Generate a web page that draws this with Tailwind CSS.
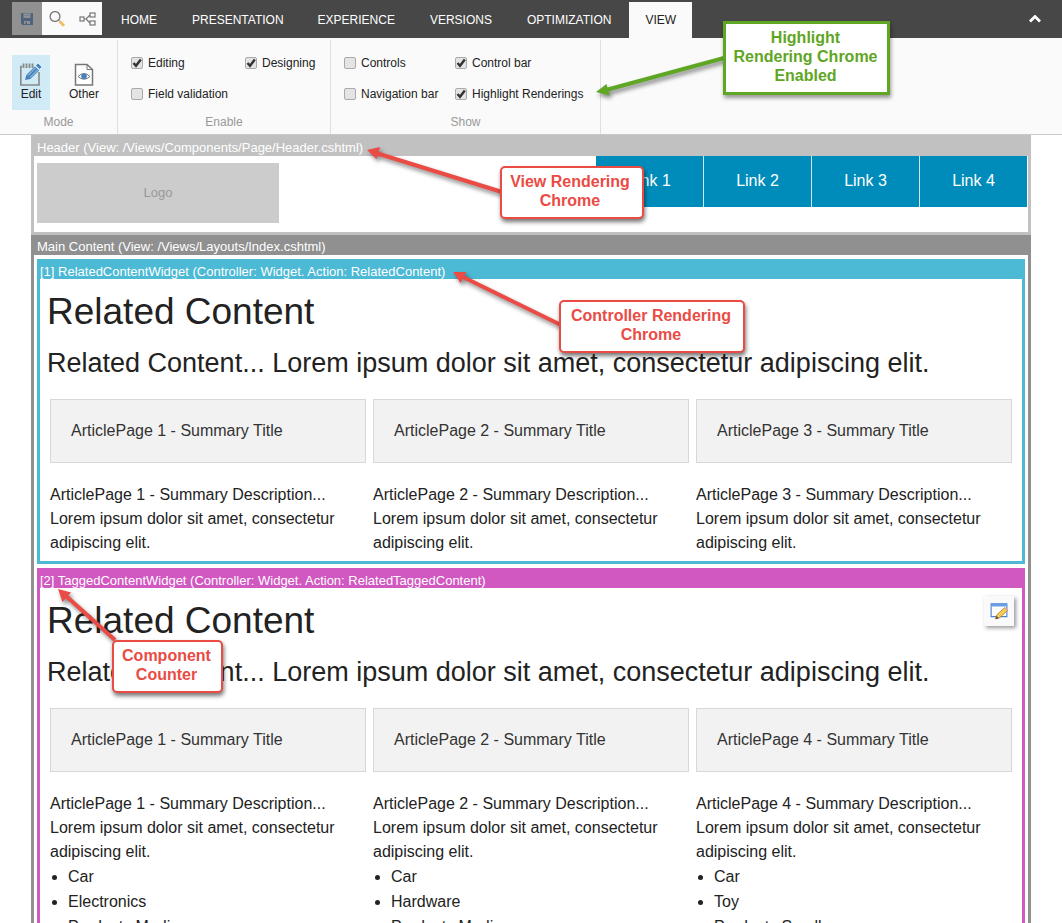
<!DOCTYPE html>
<html lang="en">
<head>
<meta charset="utf-8">
<title>Page editor</title>
<script src="https://cdn.jsdelivr.net/npm/@tailwindcss/browser@4"></script>
</head>
<body class="relative h-screen overflow-hidden bg-white font-['Liberation_Sans',Arial,sans-serif] text-[#222]">

<header>
  <div class="flex h-[38px] items-start bg-[#474747] pt-0.5 pl-3 text-xs text-white">
    <div class="flex bg-[#fafafa]">
      <button aria-label="Save" class="grid h-[33px] w-[30px] place-items-center bg-[#919191]">
        <svg class="h-3 w-3" viewBox="0 0 12 12" fill="#4d647c"><path fill-rule="evenodd" d="M0 0h2.500v5h7V0H12v12H1.500L0 10.500zM3 8v3h1.500V9H6v2h3V8z"/><path d="M3.200 0h5.600v1H3.200zM3.200 2h5.600v.800H3.200z" opacity=".4"/></svg>
      </button>
      <button aria-label="Search" class="grid h-[33px] w-[30px] place-items-center">
        <svg class="size-4" viewBox="0 0 16 16" fill="none"><circle cx="6" cy="5.500" r="4.900" stroke="#777" stroke-width="1.300"/><path d="M9.500 9l1.500 1.500" stroke="#777"/><path d="M10.500 10.200l4.500 4.500" stroke="#f0bd62" stroke-width="2.800"/></svg>
      </button>
      <button aria-label="Navigate" class="grid h-[33px] w-[30px] place-items-center">
        <svg class="h-3.5 w-[17px]" viewBox="0 0 17 14" fill="none" stroke="#777" stroke-width="1.200"><rect x="1" y="5" width="4" height="4"/><rect x="11" y="1" width="5" height="4"/><rect x="11" y="9" width="5" height="4"/><path d="M5 7l2 0 4-4M7 7l4 4"/></svg>
      </button>
    </div>
    <nav class="flex h-9 flex-1 items-stretch">
      <a href="#" class="ml-[3px] flex items-center px-4">HOME</a>
      <a href="#" class="ml-[3px] flex items-center px-4">PRESENTATION</a>
      <a href="#" class="ml-0.5 flex items-center px-4">EXPERIENCE</a>
      <a href="#" class="ml-[3px] flex items-center px-4">VERSIONS</a>
      <a href="#" class="ml-[3px] flex items-center px-4">OPTIMIZATION</a>
      <a href="#" class="ml-0.5 flex items-center bg-[#fafafa] px-4 text-[#222]">VIEW</a>
    </nav>
    <button aria-label="Collapse ribbon" class="grid h-[34px] w-[54px] place-items-center">
      <svg class="h-2 w-3" viewBox="0 0 12 8" fill="none" stroke="#fff" stroke-width="2.800"><path d="M1 6.500l5-5 5 5"/></svg>
    </button>
  </div>

  <div class="flex h-[97px] border-b border-[#c9c9c9] bg-[#fafafa] pt-0.5 text-xs">
    <section class="flex w-[118px] flex-col border-r border-[#e0e0e0] pt-[15px] pl-3">
      <div class="flex gap-2.5">
        <button class="flex h-[55px] w-[38px] flex-col items-center bg-[#d0eaf6] pt-2">
          <svg class="h-[23px] w-6" viewBox="0 0 24 23" fill="none"><path d="M3 3.500H1.800V22H20V9" stroke="#888" stroke-width="1.600"/><path d="M4.500 .500v4.500M7.500 .500v4.500M10.500 .500v4.500M13.500 .500v4.500" stroke="#888" stroke-width="1.800"/><path d="M6 17l1.300-5L16 3.500l4 4L11.300 16z" fill="#4682bd"/><path d="M9 12.500l7.500-7.500M11 14.500l7.500-7.500" stroke="#d0eaf6" stroke-width=".8"/><path d="M17.500 2.500L19 1l3 3-1.500 1.500z" fill="#4682bd" stroke="#4682bd"/></svg>
          <span>Edit</span>
        </button>
        <button class="flex h-[55px] w-12 flex-col items-center pt-2">
          <svg class="h-[23px] w-5" viewBox="0 0 20 23" fill="none"><path d="M1.500 1.500H13l5.500 5V22h-17z" fill="#fff" stroke="#777" stroke-width="1.500"/><path d="M13 1.500V6.500h5.500" stroke="#777"/><path d="M4 13.500Q10 7.500 16 13.500Q10 19 4 13.500z" stroke="#777"/><circle cx="10" cy="13.300" r="2.800" fill="#4682bd"/></svg>
          <span>Other</span>
        </button>
      </div>
      <h2 class="-ml-3 pt-1 text-center text-[#999]">Mode</h2>
    </section>

    <section class="flex w-[213px] flex-col border-r border-[#e0e0e0] pt-[15px]">
      <div class="grid grid-cols-[114px_1fr] gap-y-[15px] pl-[13px]">
        <label class="flex items-center gap-[5px] whitespace-nowrap"><input type="checkbox" checked class="peer size-3 appearance-none rounded-xs border border-[#aaa] bg-[#e4e4e4]"><svg class="pointer-events-none absolute hidden size-3 peer-checked:block" viewBox="0 0 12 12" fill="none" stroke="#333" stroke-width="2.400"><path d="M2.500 6l2.500 2.800L9.800 2.500"/></svg>Editing</label>
        <label class="flex items-center gap-[5px] whitespace-nowrap"><input type="checkbox" checked class="peer size-3 appearance-none rounded-xs border border-[#aaa] bg-[#e4e4e4]"><svg class="pointer-events-none absolute hidden size-3 peer-checked:block" viewBox="0 0 12 12" fill="none" stroke="#333" stroke-width="2.400"><path d="M2.500 6l2.500 2.800L9.800 2.500"/></svg>Designing</label>
        <label class="flex items-center gap-[5px] whitespace-nowrap"><input type="checkbox" class="size-3 appearance-none rounded-xs border border-[#aaa] bg-[#e4e4e4]">Field validation</label>
      </div>
      <h2 class="pt-3 text-center text-[#999]">Enable</h2>
    </section>

    <section class="flex w-[270px] flex-col border-r border-[#e0e0e0] pt-[15px]">
      <div class="grid grid-cols-[111px_1fr] gap-y-[15px] pl-[13px]">
        <label class="flex items-center gap-[5px] whitespace-nowrap"><input type="checkbox" class="size-3 appearance-none rounded-xs border border-[#aaa] bg-[#e4e4e4]">Controls</label>
        <label class="flex items-center gap-[5px] whitespace-nowrap"><input type="checkbox" checked class="peer size-3 appearance-none rounded-xs border border-[#aaa] bg-[#e4e4e4]"><svg class="pointer-events-none absolute hidden size-3 peer-checked:block" viewBox="0 0 12 12" fill="none" stroke="#333" stroke-width="2.400"><path d="M2.500 6l2.500 2.800L9.800 2.500"/></svg>Control bar</label>
        <label class="flex items-center gap-[5px] whitespace-nowrap"><input type="checkbox" class="size-3 appearance-none rounded-xs border border-[#aaa] bg-[#e4e4e4]">Navigation bar</label>
        <label class="flex items-center gap-[5px] whitespace-nowrap"><input type="checkbox" checked class="peer size-3 appearance-none rounded-xs border border-[#aaa] bg-[#e4e4e4]"><svg class="pointer-events-none absolute hidden size-3 peer-checked:block" viewBox="0 0 12 12" fill="none" stroke="#333" stroke-width="2.400"><path d="M2.500 6l2.500 2.800L9.800 2.500"/></svg>Highlight Renderings</label>
      </div>
      <h2 class="pt-3 text-center text-[#999]">Show</h2>
    </section>
  </div>
</header>

<div class="mx-auto max-w-[1000px]">
  <section class="border-3 border-t-0 border-[#c1c1c1]">
    <div class="bg-[#c1c1c1] pt-1 pl-[3px] text-[13px] leading-[17px] text-white">Header (View: /Views/Components/Page/Header.cshtml)</div>
    <div class="flex items-start justify-between pr-px pb-[9px] pl-[3px]">
      <div class="mt-[7px] grid h-[60px] w-[242px] place-items-center bg-[#ccc] text-[13px] text-[#999]">Logo</div>
      <nav class="grid w-[431px] grid-cols-4 gap-px bg-[#cfe9f3] text-center text-base leading-[49px] text-white">
        <a href="#" class="bg-[#008cba] pb-0.5">Link 1</a>
        <a href="#" class="bg-[#008cba] pb-0.5">Link 2</a>
        <a href="#" class="bg-[#008cba] pb-0.5">Link 3</a>
        <a href="#" class="bg-[#008cba] pb-0.5">Link 4</a>
      </nav>
    </div>
  </section>

  <main class="border-x-3 border-[#909090]">
    <div class="bg-[#909090] pt-1 pl-[3px] text-[13px] leading-4 text-white">Main Content (View: /Views/Layouts/Index.cshtml)</div>
    <div class="flex flex-col gap-1 px-[3px] py-1">

      <section class="border-3 border-t-0 border-[#4cb9d5]">
        <div class="bg-[#4cb9d5] pt-[5px] text-[13px] leading-[15px] text-white">[1] RelatedContentWidget (Controller: Widget. Action: RelatedContent)</div>
        <div class="pt-[7px] pb-1.5">
          <h1 class="pl-[7px] text-[37px] leading-[52px]">Related Content</h1>
          <p class="mt-1.5 pl-[7px] text-[27px] leading-[38px]">Related Content... Lorem ipsum dolor sit amet, consectetur adipiscing elit.</p>
          <div class="mt-[17px] grid grid-cols-3 gap-[7px] px-2.5 leading-6">
            <article><h3 class="border border-[#d8d8d8] bg-[#f2f2f2] px-5 py-[19px] text-[#333]">ArticlePage 1 - Summary Title</h3><p class="mt-5">ArticlePage 1 - Summary Description...<br>Lorem ipsum dolor sit amet, consectetur adipiscing elit.</p></article>
            <article><h3 class="border border-[#d8d8d8] bg-[#f2f2f2] px-5 py-[19px] text-[#333]">ArticlePage 2 - Summary Title</h3><p class="mt-5">ArticlePage 2 - Summary Description...<br>Lorem ipsum dolor sit amet, consectetur adipiscing elit.</p></article>
            <article><h3 class="border border-[#d8d8d8] bg-[#f2f2f2] px-5 py-[19px] text-[#333]">ArticlePage 3 - Summary Title</h3><p class="mt-5">ArticlePage 3 - Summary Description...<br>Lorem ipsum dolor sit amet, consectetur adipiscing elit.</p></article>
          </div>
        </div>
      </section>

      <section class="relative border-3 border-t-0 border-[#d157c1]">
        <div class="bg-[#d157c1] pt-[5px] text-[13px] leading-[15px] text-white">[2] TaggedContentWidget (Controller: Widget. Action: RelatedTaggedContent)</div>
        <button aria-label="Edit component" class="absolute top-7 right-2 grid size-[30px] place-items-center bg-[#fafafa] shadow-[2px_2px_4px_#999]">
          <svg class="size-[18px]" viewBox="0 0 16 16"><path d="M1 1.500h14v11.500H1z" fill="#fff" stroke="#4c83cf"/><path d="M1 1h14v3H1z" fill="#6b9fe3"/><path d="M5 15l1-3.500 7-6.500 2.500 2.500-7 6.500z" fill="#f7ce55" stroke="#b6802c" stroke-width=".8"/><path d="M5 15.200l.800-2.700 2 2z" fill="#543"/><path d="M12.500 5.500l1-.800 2.200 2.200-1 .900z" fill="#eda58c"/></svg>
        </button>
        <div class="pt-[7px] pb-1.5">
          <h1 class="pl-[7px] text-[37px] leading-[52px]">Related Content</h1>
          <p class="mt-1.5 pl-[7px] text-[27px] leading-[38px]">Related Content... Lorem ipsum dolor sit amet, consectetur adipiscing elit.</p>
          <div class="mt-[17px] grid grid-cols-3 gap-[7px] px-2.5 leading-6">
            <article><h3 class="border border-[#d8d8d8] bg-[#f2f2f2] px-5 py-[19px] text-[#333]">ArticlePage 1 - Summary Title</h3><p class="mt-5">ArticlePage 1 - Summary Description...<br>Lorem ipsum dolor sit amet, consectetur adipiscing elit.</p>
              <ul class="list-disc pl-[18px] leading-[25px]"><li>Car</li><li>Electronics</li><li>Products Medium</li></ul></article>
            <article><h3 class="border border-[#d8d8d8] bg-[#f2f2f2] px-5 py-[19px] text-[#333]">ArticlePage 2 - Summary Title</h3><p class="mt-5">ArticlePage 2 - Summary Description...<br>Lorem ipsum dolor sit amet, consectetur adipiscing elit.</p>
              <ul class="list-disc pl-[18px] leading-[25px]"><li>Car</li><li>Hardware</li><li>Products Medium</li></ul></article>
            <article><h3 class="border border-[#d8d8d8] bg-[#f2f2f2] px-5 py-[19px] text-[#333]">ArticlePage 4 - Summary Title</h3><p class="mt-5">ArticlePage 4 - Summary Description...<br>Lorem ipsum dolor sit amet, consectetur adipiscing elit.</p>
              <ul class="list-disc pl-[18px] leading-[25px]"><li>Car</li><li>Toy</li><li>Products Small</li></ul></article>
          </div>
        </div>
      </section>
    </div>
  </main>
</div>

<!-- Annotation arrows and callouts -->
<svg class="pointer-events-none absolute top-0 left-0 h-[923px] w-[1062px] drop-shadow-[2px_3px_2px_#0007]" viewBox="0 0 1062 923" fill="none" stroke-width="4">
  <g stroke="#5fa624"><path d="M724 58L606 90"/><path d="M596 92l10.500-8 3 11.500z" fill="#5fa624" stroke="none"/></g>
  <g stroke="#ea4b45"><path d="M502 192L376 153M561 325L463 277M115 640L66 596"/><path d="M367 150l13-3-3.500 12zM453 272l13.500 0-6 11zM58 589l13 3.500-8.500 9.500z" fill="#ea4b45" stroke="none"/></g>
</svg>
<div class="absolute top-[21px] left-[723px] h-[74px] w-[167px] border-3 border-[#5fa624] bg-white pt-1 pr-0.5 text-center font-bold leading-[19px] text-[#5fa624] shadow-[1px_3px_4px_#0006]">Highlight<br>Rendering Chrome<br>Enabled</div>
<div class="absolute top-[166px] left-[500px] h-[53px] w-[144px] rounded-[5px] border-2 border-[#ea4b45] bg-white pt-1 pr-1 text-center font-bold leading-[19px] text-[#ea4b45] shadow-[1px_3px_4px_#0008]">View Rendering<br>Chrome</div>
<div class="absolute top-[300px] left-[559px] h-[53px] w-[186px] rounded-[5px] border-2 border-[#ea4b45] bg-white pt-1 pr-0.5 text-center font-bold leading-[19px] text-[#ea4b45] shadow-[1px_3px_4px_#0008]">Controller Rendering<br>Chrome</div>
<div class="absolute top-[640px] left-[112px] h-[53px] w-[111px] rounded-[5px] border-2 border-[#ea4b45] bg-white pt-1 pr-0.5 text-center font-bold leading-[19px] text-[#ea4b45] shadow-[1px_3px_4px_#0008]">Component<br>Counter</div>
</body>
</html>
